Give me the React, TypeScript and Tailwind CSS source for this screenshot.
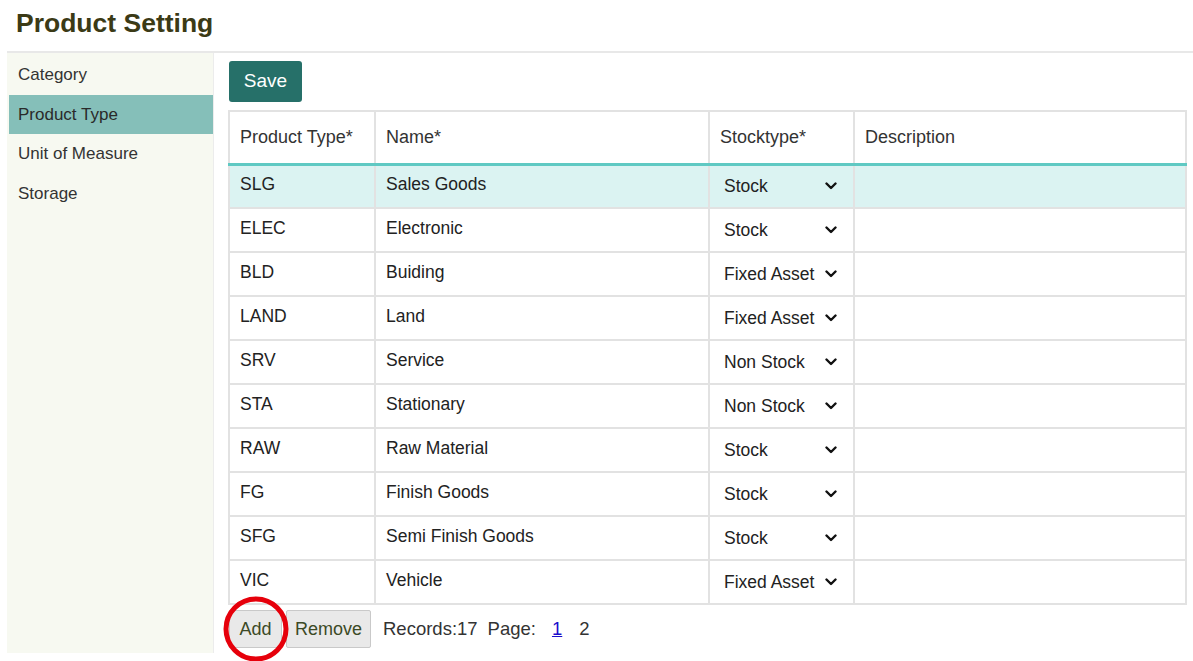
import React, { useState } from 'react';

type Row = { code: string; name: string; stock: string };

const rows: Row[] = [
    { code: 'SLG', name: 'Sales Goods', stock: 'Stock' },
    { code: 'ELEC', name: 'Electronic', stock: 'Stock' },
    { code: 'BLD', name: 'Buiding', stock: 'Fixed Asset' },
    { code: 'LAND', name: 'Land', stock: 'Fixed Asset' },
    { code: 'SRV', name: 'Service', stock: 'Non Stock' },
    { code: 'STA', name: 'Stationary', stock: 'Non Stock' },
    { code: 'RAW', name: 'Raw Material', stock: 'Stock' },
    { code: 'FG', name: 'Finish Goods', stock: 'Stock' },
    { code: 'SFG', name: 'Semi Finish Goods', stock: 'Stock' },
    { code: 'VIC', name: 'Vehicle', stock: 'Fixed Asset' },
];

const menu = ['Category', 'Product Type', 'Unit of Measure', 'Storage'];

const Chevron = () => (
    <svg width="12" height="8" viewBox="0 0 12 8" className="pointer-events-none absolute right-[16px] top-1/2 -translate-y-1/2">
        <path d="M1.5 1.5 L6 6 L10.5 1.5" fill="none" stroke="#111" strokeWidth="2.4" strokeLinecap="round" strokeLinejoin="round" />
    </svg>
);

const App = () => {
    const [active, setActive] = useState('Product Type');
    const [selected, setSelected] = useState(0);
    const [data, setData] = useState(rows);

    return (
        <div className="min-h-screen bg-white pl-[7px] text-[#333] font-['Liberation_Sans',Arial,sans-serif]">
            {/* Title */}
            <div className="h-[53px] border-b-2 border-[#e8e8e8] pl-[9px] pt-[4px]">
                <h1 className="text-[26.5px] font-bold leading-[38px] text-[#3b3a16]">Product Setting</h1>
            </div>

            <div className="flex">
                {/* Sidebar */}
                <div className="w-[207px] h-[600px] shrink-0 bg-[#f7f9f1] border-r border-[#ececec] pt-[2px]">
                    {menu.map((item) => (
                        <div
                            key={item}
                            onClick={() => setActive(item)}
                            className={`ml-[2px] h-[39.5px] flex items-center pl-[9px] text-[17px] cursor-pointer ${
                                active === item ? 'bg-[#85bfb9] text-[#2a2a2a]' : 'text-[#333]'
                            }`}
                        >
                            {item}
                        </div>
                    ))}
                </div>

                {/* Content */}
                <div className="flex-1 pl-[14px] pr-[6px] pt-[8px]">
                    <button className="ml-px h-[41px] w-[73px] rounded-[3px] bg-[#267069] text-[19px] text-white">
                        Save
                    </button>

                    <table className="mt-[8px] w-full border-collapse border-2 border-[#e2e2e2] text-[17.5px] text-[#222] table-fixed">
                        <colgroup>
                            <col className="w-[146px]" />
                            <col className="w-[334px]" />
                            <col className="w-[145px]" />
                            <col />
                        </colgroup>
                        <thead>
                            <tr className="h-[53px] border-b-[3px] border-[#5fc9c3]">
                                {['Product Type*', 'Name*', 'Stocktype*', 'Description'].map((h) => (
                                    <th key={h} className="border-x-2 border-[#e2e2e2] px-[10px] text-left text-[18px] font-normal text-[#333]">
                                        {h}
                                    </th>
                                ))}
                            </tr>
                        </thead>
                        <tbody>
                            {data.map((r, i) => (
                                <tr
                                    key={r.code}
                                    onClick={() => setSelected(i)}
                                    className={`h-[44px] border-b-2 border-[#e2e2e2] ${selected === i ? 'bg-[#dbf3f2]' : 'bg-white'}`}
                                >
                                    <td className="border-x-2 border-[#e2e2e2] px-[10px] pb-[4px]">{r.code}</td>
                                    <td className="border-x-2 border-[#e2e2e2] px-[10px] pb-[4px]">{r.name}</td>
                                    <td className="border-x-2 border-[#e2e2e2] pl-[14px] pr-0">
                                        <div className="relative">
                                            <select
                                                value={r.stock}
                                                onChange={(e) =>
                                                    setData(data.map((d, j) => (j === i ? { ...d, stock: e.target.value } : d)))
                                                }
                                                className="w-full appearance-none bg-transparent text-[17.5px] text-[#222] outline-none"
                                            >
                                                <option>Stock</option>
                                                <option>Non Stock</option>
                                                <option>Fixed Asset</option>
                                            </select>
                                            <Chevron />
                                        </div>
                                    </td>
                                    <td className="border-x-2 border-[#e2e2e2] px-[10px]"></td>
                                </tr>
                            ))}
                        </tbody>
                    </table>

                    {/* Footer */}
                    <div className="relative mt-[5px] flex items-center text-[18.5px] text-[#333]">
                        <button className="ml-px h-[38px] w-[53px] rounded-[2px] border border-[#c9c9c9] bg-[#e9e9e9] text-[18px] text-[#3c4a26]">
                            Add
                        </button>
                        <button className="ml-[4px] h-[38px] w-[85px] rounded-[2px] border border-[#c9c9c9] bg-[#e9e9e9] text-[18px] text-[#3c4a26]">
                            Remove
                        </button>
                        <span className="ml-[12px]">Records:17</span>
                        <span className="ml-[10px]">Page:</span>
                        <a href="#" className="ml-[16px] text-[#1a0dcc] underline">1</a>
                        <span className="ml-[17px]">2</span>

                        {/* annotation circle */}
                        <svg width="70" height="70" viewBox="0 0 70 70" className="pointer-events-none absolute left-[-7px] top-[-16px]">
                            <circle cx="35" cy="35" r="30" fill="none" stroke="#e6000b" strokeWidth="5" />
                        </svg>
                    </div>
                </div>
            </div>
        </div>
    );
};

export default App;
